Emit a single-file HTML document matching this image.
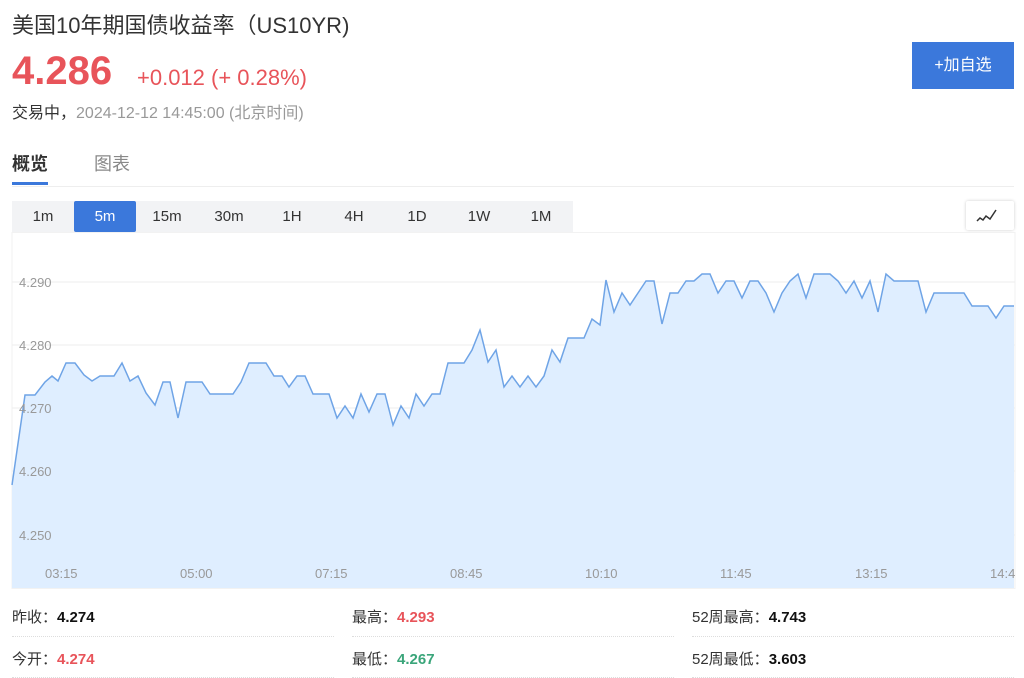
<!DOCTYPE html>
<html><head><meta charset="utf-8"><style>
*{margin:0;padding:0;box-sizing:border-box}
body{width:1024px;height:678px;overflow:hidden;background:#fff;font-family:"Liberation Sans","Noto Sans CJK SC",sans-serif;position:relative;color:#333}
.a{position:absolute;white-space:nowrap}
.tf{position:absolute;top:201px;height:31px;width:62px;text-align:center;line-height:31px;font-size:15px;color:#333;background:#f2f3f5}
.lbl{font-size:15px;color:#333}
.dot{position:absolute;height:0;border-top:1px dotted #ddd}
</style></head><body>
<div class="a" style="left:12px;top:8px;font-size:22px;color:#333">美国10年期国债收益率（US10YR)</div>
<div class="a" style="left:12px;top:49px;font-size:40px;font-weight:bold;color:#e8545a">4.286</div>
<div class="a" style="left:137px;top:65px;font-size:22px;color:#e8545a">+0.012 (+ 0.28%)</div>
<div class="a" style="left:12px;top:99px;font-size:16px;color:#333">交易中，<span style="color:#999">2024-12-12 14:45:00 (北京时间)</span></div>
<div class="a" style="left:912px;top:42px;width:102px;height:47px;background:#3b78db;color:#fff;font-size:16px;text-align:center;line-height:47px">+加自选</div>
<div class="a" style="left:12px;top:150px;font-size:18px;font-weight:bold;color:#333">概览</div>
<div class="a" style="left:94px;top:150px;font-size:18px;color:#888">图表</div>
<div class="a" style="left:12px;top:182px;width:36px;height:3px;background:#3b78db"></div>
<div class="a" style="left:12px;top:186px;width:1002px;height:1px;background:#eee"></div>
<div class="a" style="left:12px;top:201px;width:561px;height:31px;background:#f2f3f5"></div>
<div class="tf" style="left:12px">1m</div>
<div class="tf" style="left:74px;background:#3b78db;color:#fff;border-radius:2px">5m</div>
<div class="tf" style="left:136px">15m</div>
<div class="tf" style="left:198px">30m</div>
<div class="tf" style="left:261px">1H</div>
<div class="tf" style="left:323px">4H</div>
<div class="tf" style="left:386px">1D</div>
<div class="tf" style="left:448px">1W</div>
<div class="tf" style="left:510px">1M</div>
<div class="a" style="left:966px;top:201px;width:48px;height:29px;background:#fff;box-shadow:0 0 3px rgba(0,0,0,.2);border-radius:2px">
<svg width="48" height="29"><polyline points="11,20 14,17 17,19 20,15 24,18 30,9" fill="none" stroke="#333" stroke-width="1.5"/></svg></div>
<svg class="a" style="left:0;top:232px" width="1024" height="360">
<rect x="12" y="0.5" width="1003" height="356" fill="#fff" stroke="#f2f2f2"/>
<g stroke="#eee"><line x1="12" y1="50" x2="1015" y2="50"/><line x1="12" y1="113" x2="1015" y2="113"/><line x1="12" y1="176" x2="1015" y2="176"/><line x1="12" y1="239" x2="1015" y2="239"/><line x1="12" y1="303" x2="1015" y2="303"/></g>
<g transform="translate(0,-232)">
<polygon fill="#dfeeff" points="12,588 12,485 25,395 35,395 45,382 52,376 58,381 66,363 75,363 84,375 92,381 100,376 114,376 122,363 130,381 138,376 146,393 155,405 163,382 170,382 178,418 186,382 202,382 210,394 233,394 241,382 249,363 266,363 274,376 282,376 289,387 297,376 305,376 313,394 329,394 337,418 345,406 353,418 361,394 369,412 377,394 385,394 393,425 401,406 409,418 416,394 424,406 432,394 440,394 448,363 464,363 472,350 480,330 488,362 496,350 504,387 512,376 520,387 528,376 536,387 544,376 552,350 560,362 568,338 584,338 592,319 600,325 606,280 614,312 622,293 630,305 638,293 646,281 654,281 662,324 670,293 678,293 686,281 694,281 702,274 710,274 718,293 726,281 734,281 742,298 750,281 758,281 766,293 774,312 782,293 790,281 798,274 806,298 814,274 830,274 838,281 846,293 854,281 862,298 870,281 878,312 886,274 894,281 918,281 926,312 934,293 964,293 972,306 988,306 996,318 1004,306 1014,306 1014,588"/>
<polyline fill="none" stroke="#6fa4e6" stroke-width="1.5" points="12,485 25,395 35,395 45,382 52,376 58,381 66,363 75,363 84,375 92,381 100,376 114,376 122,363 130,381 138,376 146,393 155,405 163,382 170,382 178,418 186,382 202,382 210,394 233,394 241,382 249,363 266,363 274,376 282,376 289,387 297,376 305,376 313,394 329,394 337,418 345,406 353,418 361,394 369,412 377,394 385,394 393,425 401,406 409,418 416,394 424,406 432,394 440,394 448,363 464,363 472,350 480,330 488,362 496,350 504,387 512,376 520,387 528,376 536,387 544,376 552,350 560,362 568,338 584,338 592,319 600,325 606,280 614,312 622,293 630,305 638,293 646,281 654,281 662,324 670,293 678,293 686,281 694,281 702,274 710,274 718,293 726,281 734,281 742,298 750,281 758,281 766,293 774,312 782,293 790,281 798,274 806,298 814,274 830,274 838,281 846,293 854,281 862,298 870,281 878,312 886,274 894,281 918,281 926,312 934,293 964,293 972,306 988,306 996,318 1004,306 1014,306"/>
</g>
<g font-family="Liberation Sans,sans-serif" font-size="13" fill="#999">
<text x="19" y="55">4.290</text><text x="19" y="118">4.280</text><text x="19" y="181">4.270</text><text x="19" y="244">4.260</text><text x="19" y="308">4.250</text>
<text x="45" y="346">03:15</text><text x="180" y="346">05:00</text><text x="315" y="346">07:15</text><text x="450" y="346">08:45</text><text x="585" y="346">10:10</text><text x="720" y="346">11:45</text><text x="855" y="346">13:15</text><text x="990" y="346">14:4</text>
</g></svg>
<div class="a lbl" style="left:12px;top:606px">昨收：<b style="color:#111">4.274</b></div>
<div class="a lbl" style="left:352px;top:606px">最高：<b style="color:#e8545a">4.293</b></div>
<div class="a lbl" style="left:692px;top:606px">52周最高：<b style="color:#111">4.743</b></div>
<div class="a lbl" style="left:12px;top:648px">今开：<b style="color:#e8545a">4.274</b></div>
<div class="a lbl" style="left:352px;top:648px">最低：<b style="color:#3aa57a">4.267</b></div>
<div class="a lbl" style="left:692px;top:648px">52周最低：<b style="color:#111">3.603</b></div>
<div class="dot" style="left:12px;top:636px;width:322px"></div>
<div class="dot" style="left:352px;top:636px;width:322px"></div>
<div class="dot" style="left:692px;top:636px;width:322px"></div>
<div class="dot" style="left:12px;top:677px;width:322px"></div>
<div class="dot" style="left:352px;top:677px;width:322px"></div>
<div class="dot" style="left:692px;top:677px;width:322px"></div>
</body></html>
